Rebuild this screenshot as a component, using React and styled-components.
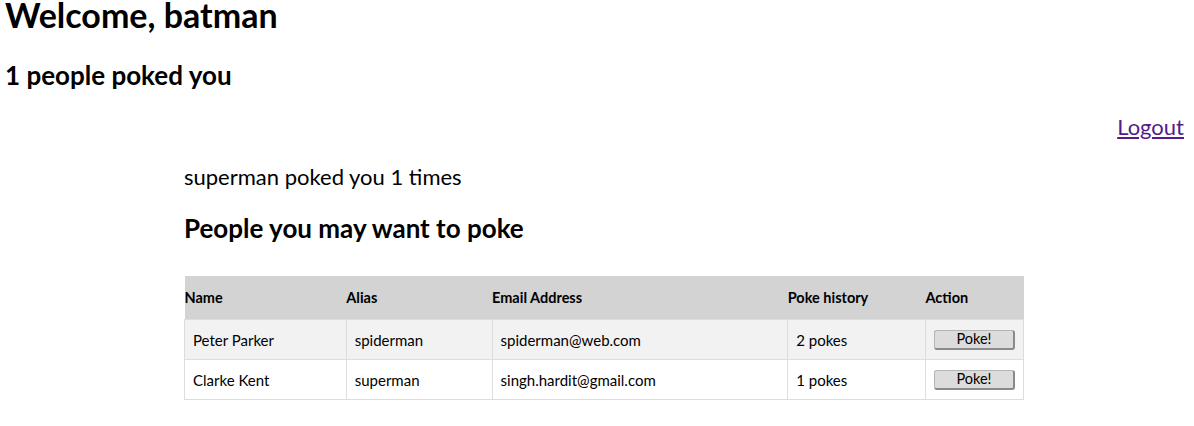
import React from "react";
import styled, { createGlobalStyle } from "styled-components";

const Global = createGlobalStyle`
  body {
    margin: 0;
    font-family: Lato, "Open Sans", sans-serif;
    color: #000;
    background: #fff;
  }
`;

const Page = styled.div`
  padding: 0 10px 0 5px;
`;

const Title = styled.h1`
  font-size: 34px;
  font-weight: 700;
  margin: 0;
  line-height: 30px;
`;

const Sub = styled.h2`
  font-size: 26px;
  font-weight: 700;
  margin: 30px 0 0;
  line-height: 30px;
`;

const TopBar = styled.div`
  display: flex;
  justify-content: flex-end;
  margin-top: 24px;
  line-height: 26px;
`;

const Logout = styled.a`
  font-size: 22px;
  color: #551a8b;
  text-decoration: underline;
  cursor: pointer;
`;

const Content = styled.div`
  margin-left: 179px;
  width: 840px;
`;

const Poked = styled.p`
  font-size: 22px;
  margin: 24px 0 0;
  line-height: 26px;
`;

const Section = styled.h3`
  font-size: 26px;
  font-weight: 700;
  margin: 23px 0 0;
  line-height: 30px;
`;

const Table = styled.table`
  margin-top: 33px;
  width: 840px;
  border-collapse: collapse;
  font-size: 15px;
`;

const Th = styled.th`
  background: #d3d3d3;
  text-align: left;
  font-weight: 700;
  font-size: 14.5px;
  height: 43px;
  padding: 0;
  width: ${(p) => p.w}px;
`;

const Tr = styled.tr`
  background: ${(p) => (p.odd ? "#f2f2f2" : "#fff")};
`;

const Td = styled.td`
  border: 1px solid #dddddd;
  padding: 0 8px;
  height: 39px;
`;

const PokeButton = styled.button`
  font-family: Lato, "Open Sans", sans-serif;
  font-size: 14.5px;
  width: 81px;
  height: 20px;
  padding: 0;
  line-height: 16px;
  background: #dcdcdc;
  border: 1px solid #b5b5b5;
  border-right: 2px solid #8a8a8a;
  border-bottom: 2px solid #8a8a8a;
  border-radius: 3px;
  color: #000;
  cursor: pointer;
`;

const people = [
  { name: "Peter Parker", alias: "spiderman", email: "spiderman@web.com", pokes: 2 },
  { name: "Clarke Kent", alias: "superman", email: "singh.hardit@gmail.com", pokes: 1 },
];

const columns = [
  ["Name", 162],
  ["Alias", 146],
  ["Email Address", 296],
  ["Poke history", 138],
  ["Action", 98],
];

export default function App() {
  return (
    <>
      <Global />
      <Page>
        <Title>Welcome, batman</Title>
        <Sub>1 people poked you</Sub>
        <TopBar>
          <Logout href="#">Logout</Logout>
        </TopBar>
        <Content>
          <Poked>superman poked you 1 times</Poked>
          <Section>People you may want to poke</Section>
          <Table>
            <thead>
              <tr>
                {columns.map(([label, w]) => (
                  <Th key={label} w={w}>{label}</Th>
                ))}
              </tr>
            </thead>
            <tbody>
              {people.map((p, i) => (
                <Tr key={p.alias} odd={i % 2 === 0}>
                  <Td>{p.name}</Td>
                  <Td>{p.alias}</Td>
                  <Td>{p.email}</Td>
                  <Td>{p.pokes} pokes</Td>
                  <Td>
                    <PokeButton>Poke!</PokeButton>
                  </Td>
                </Tr>
              ))}
            </tbody>
          </Table>
        </Content>
      </Page>
    </>
  );
}
